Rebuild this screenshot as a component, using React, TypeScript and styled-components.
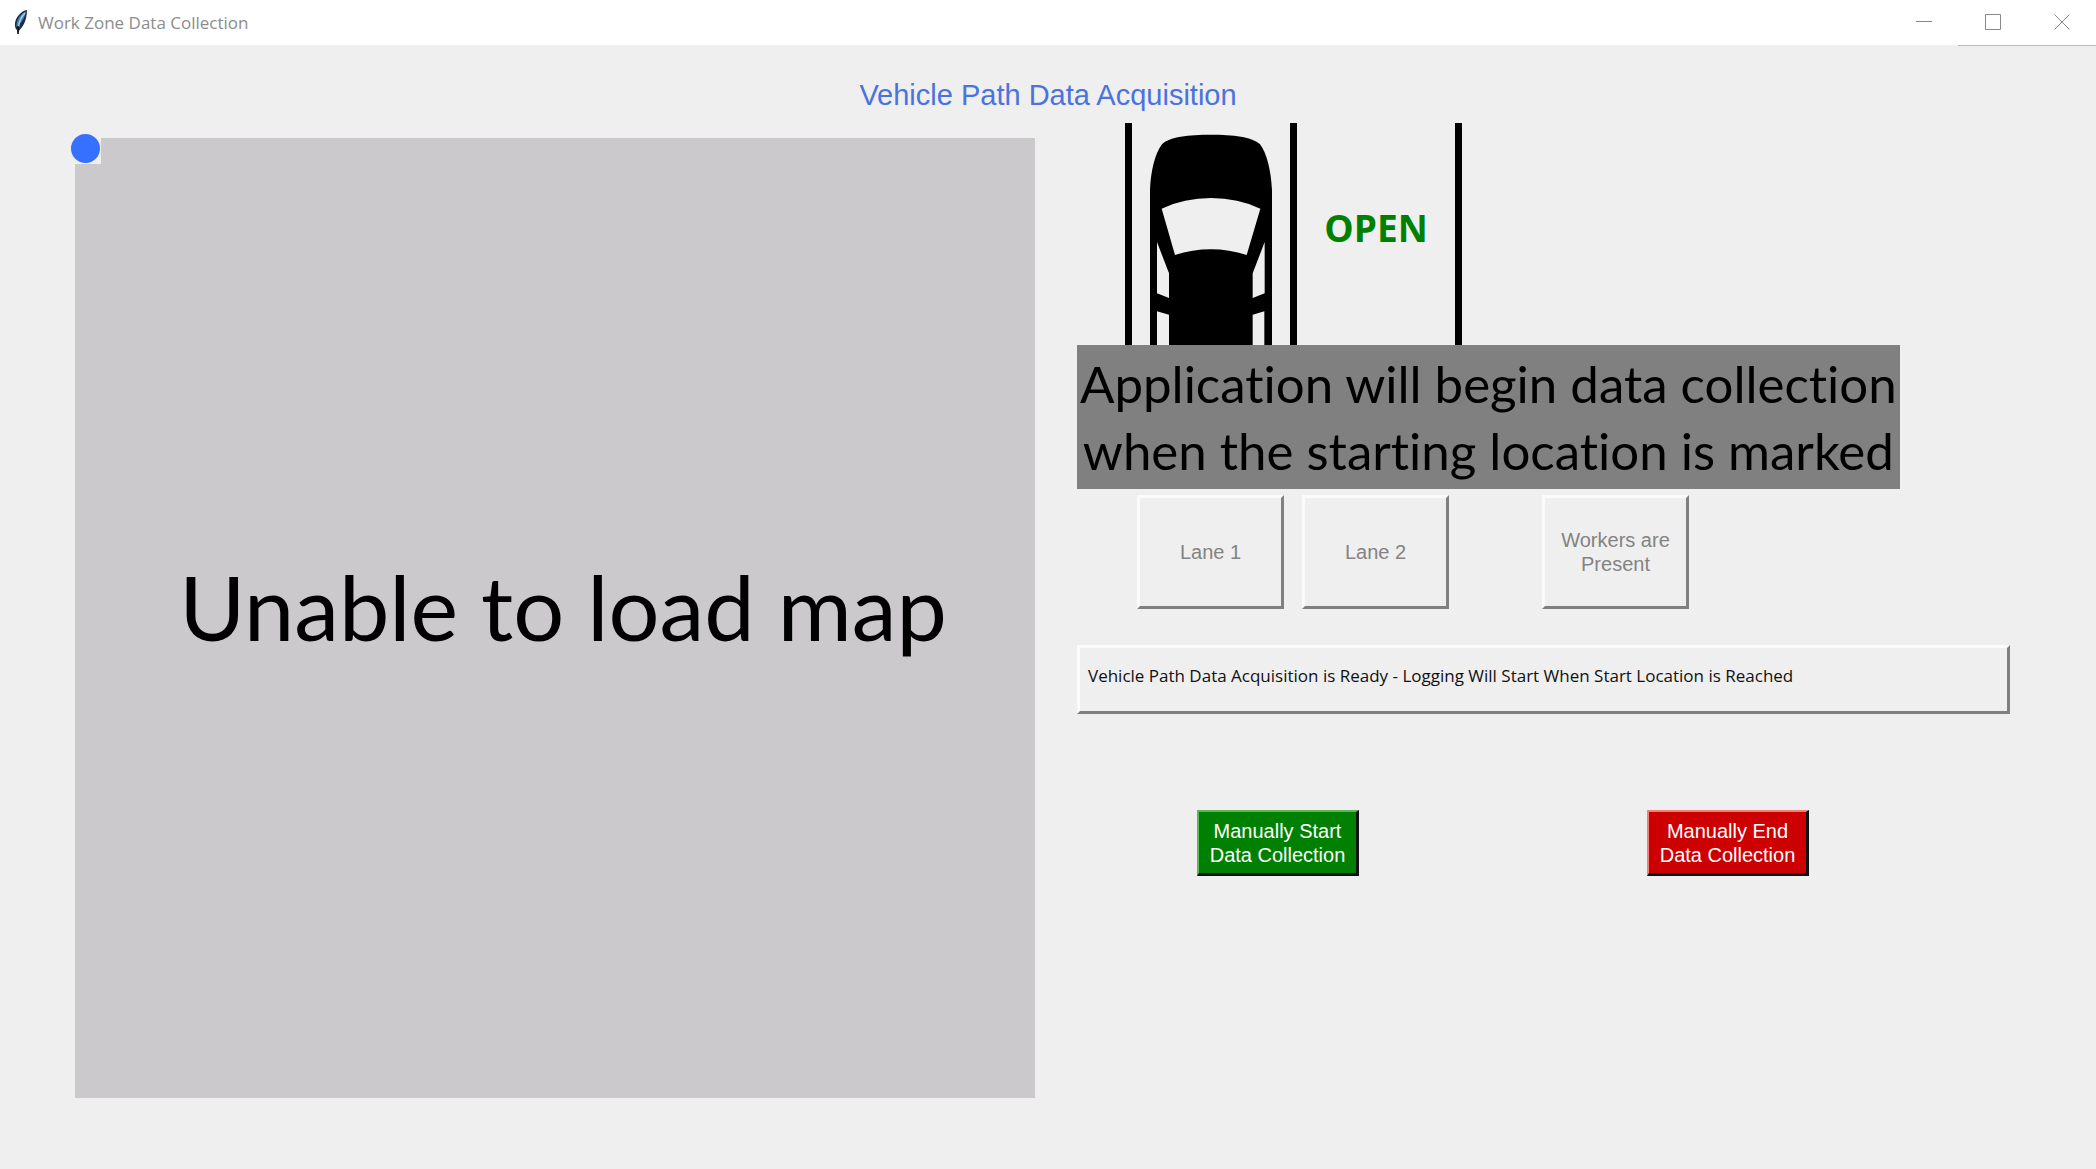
import React from "react";
import styled, { createGlobalStyle } from "styled-components";

const GlobalStyle = createGlobalStyle`
  *, *::before, *::after { box-sizing: border-box; }
  body { margin: 0; background: #efefef; }
`;

const sans = `"Liberation Sans", Arial, sans-serif`;
const humanist = `"Open Sans", "Noto Sans", sans-serif`;
const rounded = `Lato, Carlito, sans-serif`;

const Window = styled.div`
  min-height: 100vh;
  display: flex;
  flex-direction: column;
  background: #efefef;
  font-family: ${sans};
`;

const TitleBar = styled.header`
  display: flex;
  align-items: stretch;
  height: 45px;
  background: #fff;
`;

const TitleGroup = styled.div`
  flex: 1;
  display: flex;
  align-items: center;
  gap: 9px;
  padding: 0 0 2px 13px;
`;

const WindowTitle = styled.span`
  padding-top: 2px;
  font: 400 17px/24px ${humanist};
  color: #8c8c8c;
`;

const Controls = styled.div<{ $lined?: boolean }>`
  display: flex;
  height: ${(p) => (p.$lined ? 46 : 45)}px;
  border-bottom: ${(p) => (p.$lined ? "1px solid #bdbdbd" : "0")};
`;

const ControlButton = styled.button`
  width: 69px;
  padding: 0 0 2px;
  border: 0;
  background: #fff;
  display: flex;
  align-items: center;
  justify-content: center;
`;

const Heading = styled.h1`
  margin: 34px 0 0;
  text-align: center;
  font: 400 29px/32px ${sans};
  color: #4a72e0;
`;

const Content = styled.main`
  display: grid;
  grid-template-columns: minmax(0, 960fr) minmax(0, 933fr);
  column-gap: 42px;
  align-items: start;
  padding: 12px 86px 48px 75px;
`;

const MapPanel = styled.section`
  position: relative;
  aspect-ratio: 1;
  margin-top: 15px;
  background: #cbc9cc;
  display: flex;
  align-items: center;
  justify-content: center;
`;

const MapMessage = styled.p`
  margin: 0 0 24px;
  padding-left: 16px;
  font: 400 90px/104px ${rounded};
  color: #000;
  white-space: nowrap;
`;

const Marker = styled.div`
  position: absolute;
  left: -4px;
  top: -4px;
  width: 30px;
  height: 30px;
  background: #efefef;
  &::before {
    content: "";
    display: block;
    width: 29px;
    height: 29px;
    border-radius: 50%;
    background: #3670ff;
  }
`;

const Side = styled.section`
  display: flex;
  flex-direction: column;
  align-items: flex-start;
`;

const Lanes = styled.div`
  display: flex;
  height: 222px;
  margin-left: 48px;
  border-right: 7px solid #000;
`;

const Lane = styled.div`
  width: 165px;
  border-left: 7px solid #000;
  display: flex;
  align-items: center;
  justify-content: center;
`;

const LaneState = styled.span`
  padding-bottom: 12px;
  font: 700 37px/44px ${humanist};
  color: #008000;
`;

const Banner = styled.p`
  margin: 0;
  padding: 5px 3px;
  background: #808080;
  color: #000;
  font: 400 51px/67px ${rounded};
  font-variant-ligatures: none;
  text-align: center;
  white-space: nowrap;
`;

const LaneButtons = styled.div`
  display: flex;
  gap: 18px;
  margin: 6px 0 0 60px;
`;

const raised = `
  border: 3px solid;
  border-color: #fbfbfb #808080 #808080 #fbfbfb;
`;

const ToggleButton = styled.button<{ $apart?: boolean }>`
  ${raised}
  width: 147px;
  height: 114px;
  margin-left: ${(p) => (p.$apart ? 75 : 0)}px;
  padding: 0 12px;
  background: #efefef;
  color: #838383;
  font: 400 20px/24px ${sans};
`;

const LogPanel = styled.div`
  ${raised}
  align-self: stretch;
  height: 69px;
  margin-top: 36px;
  padding: 16px 8px;
  font: 400 17px/24px ${humanist};
  color: #111;
`;

const Actions = styled.div`
  display: flex;
  gap: 288px;
  margin: 96px 0 0 120px;
`;

const ActionButton = styled.button<{ $color: string; $light: string }>`
  width: 162px;
  height: 66px;
  padding: 0;
  background: ${(p) => p.$color};
  border: solid #000;
  border-width: 2px 3px 3px 2px;
  border-color: ${(p) => p.$light} #111 #111 ${(p) => p.$light};
  color: #fff;
  font: 400 20px/24px ${sans};
`;

const Feather = () => (
  <svg width="16" height="26" viewBox="0 0 16 26" aria-hidden="true">
    <path d="M14 1C8 2 3 8 2 14c-.4 3 .4 6 2 7l1 4 1.500-4C10 18 14 11 14 1z" fill="#1c2d44" />
    <path d="M13 2.500C7 5 3 11 3.500 18c4-3 8-8 9.500-15.500z" fill="#4a7cb3" />
    <path d="M12 4C8 8 6 13 5.500 18" stroke="#a9cdec" strokeWidth="1.500" fill="none" />
    <path d="M5 17V25" stroke="#0c1118" strokeWidth="1.500" fill="none" />
  </svg>
);

const Car = () => (
  <svg width="122" height="222" viewBox="123 39 366 666" role="img" aria-label="Vehicle in lane">
    <path
      fillRule="evenodd"
      d="M123 705V240C125 185 138 130 159 103C180 80 240 74 306 74C372 74 430 80 453 103C474 130 486 185 489 240V705H466V604L431 614V705H180V614L144 604V705Z
         M158 296Q225 264 306 264Q387 264 454 296L413 435Q360 418 306 418Q250 418 198 435Z
         M144 396L180 490V564L144 550Z M467 396L431 490V564L467 550Z"
      fill="#000"
    />
  </svg>
);

export default function App() {
  return (
    <Window>
      <GlobalStyle />
      <TitleBar>
        <TitleGroup>
          <Feather />
          <WindowTitle>Work Zone Data Collection</WindowTitle>
        </TitleGroup>
        <Controls>
          <ControlButton aria-label="Minimize">
            <svg width="16" height="16"><path d="M0 7.500H16" stroke="#888" /></svg>
          </ControlButton>
        </Controls>
        <Controls $lined>
          <ControlButton aria-label="Maximize">
            <svg width="16" height="16"><path d="M.5 .5H15.500V15.500H.5Z" stroke="#888" fill="none" /></svg>
          </ControlButton>
          <ControlButton aria-label="Close">
            <svg width="16" height="16"><path d="M.5 .5L15.500 15.500M15.500 .5L.5 15.500" stroke="#888" /></svg>
          </ControlButton>
        </Controls>
      </TitleBar>
      <Heading>Vehicle Path Data Acquisition</Heading>
      <Content>
        <MapPanel aria-label="Map">
          <MapMessage>Unable to load map</MapMessage>
          <Marker />
        </MapPanel>
        <Side>
          <Lanes>
            <Lane><Car /></Lane>
            <Lane><LaneState>OPEN</LaneState></Lane>
          </Lanes>
          <Banner>
            Application will begin data collection
            <br />
            when the starting location is marked
          </Banner>
          <LaneButtons>
            <ToggleButton disabled>Lane 1</ToggleButton>
            <ToggleButton disabled>Lane 2</ToggleButton>
            <ToggleButton disabled $apart>Workers are Present</ToggleButton>
          </LaneButtons>
          <LogPanel role="status">
            Vehicle Path Data Acquisition is Ready - Logging Will Start When Start Location is Reached
          </LogPanel>
          <Actions>
            <ActionButton $color="#008000" $light="#5fb35f">
              Manually Start
              <br />
              Data Collection
            </ActionButton>
            <ActionButton $color="#cc0000" $light="#f08080">
              Manually End
              <br />
              Data Collection
            </ActionButton>
          </Actions>
        </Side>
      </Content>
    </Window>
  );
}
